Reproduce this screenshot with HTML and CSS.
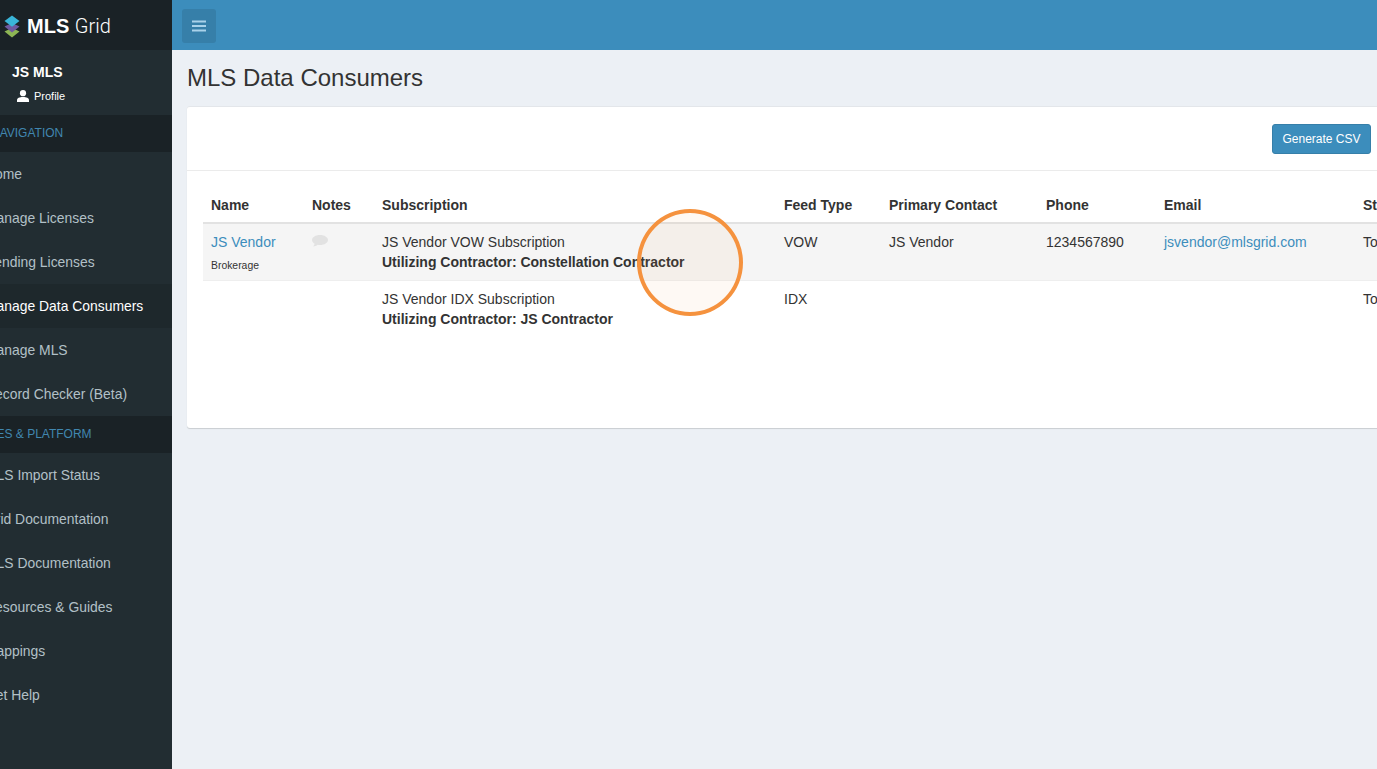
FILE: index.html
```html
<!DOCTYPE html>
<html lang="en">
<head>
<meta charset="utf-8">
<title>MLS Data Consumers</title>
<link rel="stylesheet" href="styles.css">
</head>
<body>
<div class="app">
  <aside class="sidebar">
    <div class="logo">
      <svg class="logo-mark" width="16" height="23" viewBox="0 0 16 23">
        <path d="M8 13 15.500 16.600 8 22.500.5 16.600Z" fill="#8db654"/>
        <path d="M8 8 15.500 11.600 8 17.500.5 11.600Z" fill="#6d5aa0"/>
        <path d="M8 .5 15.500 6 8 11.800.5 6Z" fill="#39b5d8"/>
      </svg>
      <span class="logo-text"><b>MLS</b> <span class="logo-light">Grid</span></span>
    </div>
    <div class="user">
      <div class="user-name">JS MLS</div>
      <div class="user-profile">
        <svg width="12" height="12" viewBox="0 0 12 12"><circle cx="6" cy="3.200" r="3.100" fill="#fff"/><path d="M0 12V10.200C0 8.200 2.400 7 6 7s6 1.200 6 3.200V12Z" fill="#fff"/></svg>
        <span>Profile</span>
      </div>
    </div>
    <div class="section">NAVIGATION</div>
    <a class="item">Home</a>
    <a class="item">Manage Licenses</a>
    <a class="item">Pending Licenses</a>
    <a class="item active">Manage Data Consumers</a>
    <a class="item">Manage MLS</a>
    <a class="item">Record Checker (Beta)</a>
    <div class="section section-alt">SERVICES &amp; PLATFORM</div>
    <a class="item">MLS Import Status</a>
    <a class="item">Grid Documentation</a>
    <a class="item">MLS Documentation</a>
    <a class="item">Resources &amp; Guides</a>
    <a class="item">Mappings</a>
    <a class="item">Get Help</a>
  </aside>
  <div class="main">
    <header class="topbar">
      <button class="menu-btn" aria-label="Menu">
        <svg width="14" height="12" viewBox="0 0 14 12"><path d="M0 1.500H14M0 6H14M0 10.500H14" stroke="#a9d2ea" stroke-width="1.800"/></svg>
      </button>
    </header>
    <main class="content">
      <h1 class="title">MLS Data Consumers</h1>
      <section class="card">
        <div class="card-head"><button class="csv-btn">Generate CSV</button></div>
        <div class="card-body">
          <table class="data">
            <colgroup>
              <col class="c-name"><col class="c-notes"><col class="c-sub"><col class="c-feed"><col class="c-contact"><col class="c-phone"><col class="c-email"><col class="c-status">
            </colgroup>
            <thead>
              <tr><th>Name</th><th>Notes</th><th>Subscription</th><th>Feed Type</th><th>Primary Contact</th><th>Phone</th><th>Email</th><th>Status</th></tr>
            </thead>
            <tbody>
              <tr class="striped">
                <td><a class="link">JS Vendor</a><div class="small">Brokerage</div></td>
                <td><svg class="note" width="16" height="12" viewBox="0 0 16 12"><path d="M8 0C3.600 0 0 2.200 0 5c0 1.500 1 2.800 2.600 3.700C2.400 9.800 1.700 10.900 1 11.600c1.800-.1 3.500-.8 4.700-1.800.7.100 1.500.200 2.300.200 4.400 0 8-2.200 8-5S12.400 0 8 0Z" fill="#e2e2e2"/></svg></td>
                <td>JS Vendor VOW Subscription<div class="strong">Utilizing Contractor: Constellation Contractor</div></td>
                <td>VOW</td>
                <td>JS Vendor</td>
                <td>1234567890</td>
                <td><a class="link">jsvendor@mlsgrid.com</a></td>
                <td>Total</td>
              </tr>
              <tr>
                <td></td>
                <td></td>
                <td>JS Vendor IDX Subscription<div class="strong">Utilizing Contractor: JS Contractor</div></td>
                <td>IDX</td>
                <td></td>
                <td></td>
                <td></td>
                <td>Total</td>
              </tr>
            </tbody>
          </table>
        </div>
      </section>
    </main>
  </div>
</div>
<div class="highlight"></div>
</body>
</html>
```
FILE: styles.css
```css
* { box-sizing: border-box; }
html, body { margin: 0; height: 100%; overflow: hidden; }
body { font-family: "Liberation Sans", Arial, sans-serif; font-size: 14px; color: #333; background: #ecf0f5; }
.app { display: flex; height: 769px; }
.sidebar { width: 172px; flex: none; background: #222d32; overflow: hidden; color: #b2c0c7; }
.logo { height: 50px; background: #1a2226; display: flex; align-items: center; padding: 2px 0 0 4px; gap: 7px; }
.logo-mark { flex: none; }
.logo-text { font-size: 20px; color: #fff; white-space: nowrap; }
.logo-light { font-family: Roboto, sans-serif; font-weight: 300; }
.user { height: 65px; padding: 14px 0 0 12px; color: #fff; }
.user-name { font-weight: 700; font-size: 14px; line-height: 16px; }
.user-profile { display: flex; align-items: center; gap: 5px; margin: 9px 0 0 5px; font-size: 11px; line-height: 14px; }
.section { height: 37px; line-height: 36px; background: #1a2226; color: #4187b0; font-size: 12px; white-space: nowrap; text-indent: -9px; }
.section-alt { text-indent: -48px; }
.item { display: block; height: 44px; line-height: 44px; font-size: 13.9px; white-space: nowrap; text-indent: -15px; color: #b2c0c7; }
.item.active { background: #1e282c; color: #fff; }
.main { width: 1205px; flex: none; }
.topbar { height: 50px; background: #3c8dbc; display: flex; align-items: center; padding: 2px 0 0 10px; }
.menu-btn { width: 34px; height: 34px; border: 0; border-radius: 3px; background: #367fa9; padding: 0; display: flex; align-items: center; justify-content: center; }
.content { padding: 0 15px; }
.title { margin: 0; height: 56px; font-size: 24px; font-weight: 400; line-height: 56px; color: #333; }
.card { background: #fff; border-top: 1px solid #e3e6ea; box-shadow: 0 1px 1px rgba(0,0,0,.15); border-radius: 3px; height: 322px; width: 1199px; }
.card-head { height: 64px; border-bottom: 1px solid #ebebeb; display: flex; justify-content: flex-end; align-items: flex-start; padding: 17px 15px 0 0; }
.csv-btn { width: 99px; height: 30px; padding: 0; background: #3c8dbc; border: 1px solid #367fa9; border-radius: 3px; color: #fff; font: 12px "Liberation Sans", Arial, sans-serif; }
.card-body { padding: 16px 0 0 16px; }
.data { border-collapse: collapse; table-layout: fixed; width: 1184px; }
.c-name { width: 101px; } .c-notes { width: 70px; } .c-sub { width: 402px; } .c-feed { width: 105px; }
.c-contact { width: 157px; } .c-phone { width: 118px; } .c-email { width: 199px; } .c-status { width: 32px; }
.data th { text-align: left; font-weight: 700; height: 36px; padding: 0 8px; border-bottom: 2px solid #e2e2e2; white-space: nowrap; overflow: hidden; vertical-align: middle; }
.data td { vertical-align: top; padding: 8px 8px 7px; line-height: 20px; height: 55px; border-bottom: 1px solid #eee; white-space: nowrap; overflow: hidden; }
.data tbody tr:last-child td { border-bottom: 0; }
.striped td { background: #f5f5f5; }
.link { color: #3c8dbc; }
.small { font-size: 10.4px; line-height: 14px; margin-top: 7px; }
.strong { font-weight: 700; }
.note { display: block; margin-top: 3px; }
.highlight { position: absolute; left: 637px; top: 209px; width: 106px; height: 107px; border-radius: 50%; border: 4px solid #f5923e; background: rgba(245,146,62,.06); }
```
